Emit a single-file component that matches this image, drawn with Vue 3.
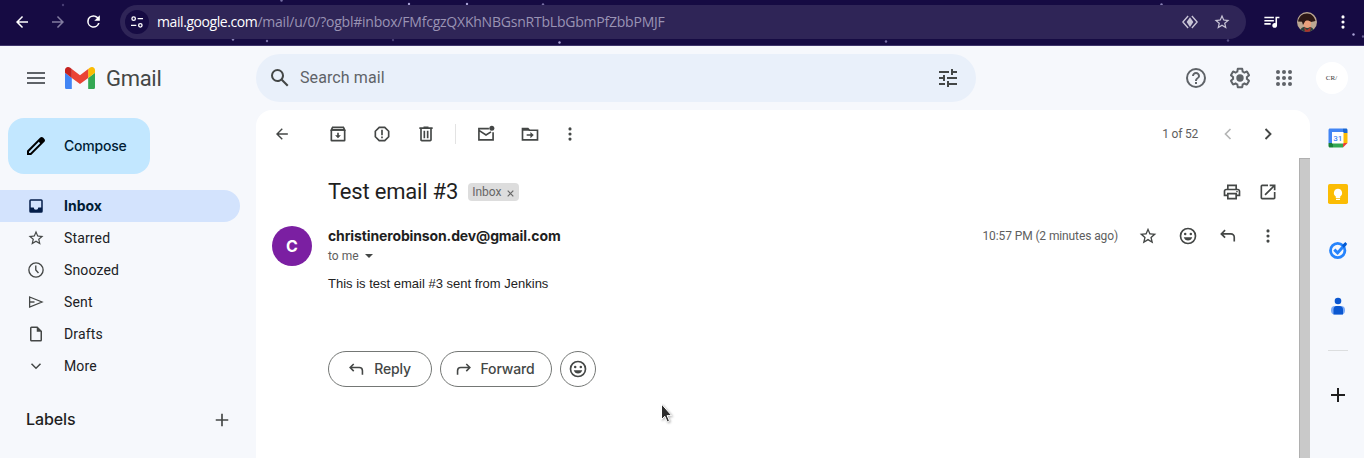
<script setup>
import { h } from 'vue'

const glyphs = {
  menu: '<path d="M3 18h18v-2H3v2zm0-5h18v-2H3v2zm0-7v2h18V6H3z"/>',
  back: '<path d="M20 11H7.83l5.59-5.59L12 4l-8 8 8 8 1.41-1.41L7.83 13H20v-2z"/>',
  forward: '<path d="M12 4l-1.41 1.41L16.17 11H4v2h12.17l-5.58 5.59L12 20l8-8z"/>',
  backThin: '<path d="M19 11.1H8.1l4.8-4.9L11.7 5l-6.9 7 6.9 7 1.2-1.2-4.8-4.9H19z"/>',
  reload: '<path d="M17.65 6.35A7.96 7.96 0 0 0 12 4a8 8 0 1 0 7.73 10h-2.08A6 6 0 1 1 12 6c1.66 0 3.14.69 4.22 1.78L13 11h7V4l-2.35 2.35z"/>',
  site: '<g fill="none" stroke="currentColor" stroke-width="2"><circle cx="7" cy="7" r="2.6"/><path d="M13 7h8M3 17h8"/><circle cx="17" cy="17" r="2.6"/></g>',
  lens: '<path d="M9.500 4 2.500 12l7 8M14.500 4l7 8-7 8" fill="none" stroke="currentColor" stroke-width="1.800" stroke-linejoin="round"/><path d="M12 5.500 16.500 12 12 18.500 7.500 12z"/>',
  star: '<path d="M22 9.24l-7.19-.62L12 2 9.19 8.630 2 9.240l5.460 4.730L5.820 21 12 17.270 18.180 21l-1.630-7.030L22 9.240zM12 15.400l-3.760 2.270 1-4.280-3.320-2.880 4.380-.38L12 6.100l1.710 4.040 4.380.38-3.320 2.880 1 4.280L12 15.400z"/>',
  queue: '<path d="M15 6H3v2h12V6zm0 4H3v2h12v-2zM3 16h8v-2H3v2zM17 6v8.180c-.31-.11-.65-.18-1-.18-1.660 0-3 1.340-3 3s1.340 3 3 3 3-1.340 3-3V8h3V6h-5z"/>',
  dots: '<circle cx="12" cy="5.900" r="1.900"/><circle cx="12" cy="12" r="1.900"/><circle cx="12" cy="18.100" r="1.900"/>',
  search: '<path d="M20.490 19l-5.730-5.730C15.530 12.200 16 10.910 16 9.500A6.500 6.500 0 1 0 9.500 16c1.410 0 2.700-.47 3.770-1.240L19 20.490 20.490 19zM5 9.500C5 7.010 7.010 5 9.500 5S14 7.010 14 9.500 11.990 14 9.500 14 5 11.990 5 9.500z"/>',
  tune: '<path d="M3 17v2h6v-2H3zM3 5v2h10V5H3zm10 16v-2h8v-2h-8v-2h-2v6h2zM7 9v2H3v2h4v2h2V9H7zm14 4v-2H11v2h10zm-6-4h2V7h4V5h-4V3h-2v6z"/>',
  help: '<path d="M11 18h2v-2h-2v2zm1-16a10 10 0 1 0 0 20 10 10 0 0 0 0-20zm0 18a8 8 0 1 1 0-16 8 8 0 0 1 0 16zm0-14c-2.210 0-4 1.790-4 4h2c0-1.100.9-2 2-2s2 .9 2 2c0 2-3 1.750-3 5h2c0-2.250 3-2.500 3-5 0-2.210-1.790-4-4-4z"/>',
  gear: '<path d="M13.850 22.250h-3.700c-.74 0-1.360-.54-1.450-1.270l-.27-1.890a7.500 7.500 0 0 1-.79-.46l-1.800.72c-.7.26-1.470-.03-1.810-.65L2.200 15.530c-.35-.66-.2-1.440.36-1.880l1.530-1.190c-.01-.15-.02-.3-.02-.46s.01-.31.02-.46l-1.520-1.190c-.59-.45-.74-1.260-.37-1.880l1.850-3.190c.34-.62 1.110-.9 1.790-.63l1.810.73c.26-.17.52-.32.78-.46l.27-1.910c.09-.7.71-1.250 1.440-1.250h3.700c.74 0 1.360.54 1.450 1.270l.27 1.890c.27.14.53.29.79.46l1.800-.72c.71-.26 1.480.03 1.820.65l1.840 3.180c.36.66.2 1.440-.36 1.880l-1.520 1.190c.01.15.02.3.02.46s-.01.31-.02.46l1.520 1.190c.56.45.72 1.230.37 1.860l-1.860 3.220c-.34.62-1.110.9-1.800.63l-1.800-.72c-.26.17-.52.32-.78.46l-.27 1.910c-.1.680-.720 1.220-1.460 1.220zm-3.230-2h2.760l.37-2.550.53-.22c.44-.18.88-.44 1.340-.78l.45-.34 2.380.96 1.380-2.400-2.030-1.580.07-.56c.03-.26.06-.51.06-.78s-.03-.53-.06-.78l-.07-.56 2.030-1.580-1.390-2.400-2.390.96-.45-.35c-.42-.32-.87-.58-1.330-.77l-.52-.22-.37-2.550h-2.760l-.37 2.550-.53.21c-.44.19-.88.44-1.340.79l-.45.33-2.380-.95-1.390 2.390 2.030 1.580-.07.56a7 7 0 0 0-.06.79c0 .26.020.53.060.78l.070.560-2.030 1.580 1.380 2.400 2.390-.96.450.350c.430.330.860.580 1.330.770l.530.220.380 2.550z"/><circle cx="12" cy="12" r="3.700"/>',
  apps: '<circle cx="6" cy="6" r="2"/><circle cx="12" cy="6" r="2"/><circle cx="18" cy="6" r="2"/><circle cx="6" cy="12" r="2"/><circle cx="12" cy="12" r="2"/><circle cx="18" cy="12" r="2"/><circle cx="6" cy="18" r="2"/><circle cx="12" cy="18" r="2"/><circle cx="18" cy="18" r="2"/>',
  pencil: '<path d="M20.410 4.940l-1.350-1.350c-.780-.780-2.050-.780-2.830 0L3 16.820V21h4.180L20.410 7.770c.790-.780.790-2.050 0-2.830zM6.350 19H5v-1.350l9.800-9.800 1.350 1.350z"/>',
  inbox: '<path d="M19 3H5a2 2 0 0 0-2 2v14a2 2 0 0 0 2 2h14a2 2 0 0 0 2-2V5a2 2 0 0 0-2-2zm0 11h-4a3 3 0 0 1-6 0H5V5h14v9z"/>',
  clock: '<circle cx="12" cy="12" r="9.500" fill="none" stroke="currentColor" stroke-width="1.800"/><path d="M11.700 6V12l3.600 4" fill="none" stroke="currentColor" stroke-width="1.800"/>',
  send: '<path d="M3.500 5.300 20 12 3.500 18.700z" fill="none" stroke="currentColor" stroke-width="1.700"/><path d="M4 12h6" fill="none" stroke="currentColor" stroke-width="1.900"/>',
  file: '<path d="M14 2H6a2 2 0 0 0-2 2v16c0 1.100.890 2 1.990 2H18a2 2 0 0 0 2-2V8l-6-6zM6 20V4h7v5h5v11H6z"/>',
  down: '<path d="M6 9l6 6 6-6" fill="none" stroke="currentColor" stroke-width="2"/>',
  plus: '<path d="M19.500 13h-6.500v6.500h-2V13H4.500v-2H11V4.500h2V11h6.500z"/>',
  archive: '<path d="M4 7v12.500c0 .3.200.5.500.5h15c.3 0 .5-.2.500-.5V7M4 7l1.500-3h13L20 7z" fill="none" stroke="currentColor" stroke-width="2"/><path d="M4 6h16v2H4zM11 10.500h2v3h2.500L12 17.200 8.500 13.500H11z"/>',
  report: '<path d="M8.700 4h6.600L20 8.700v6.600L15.300 20H8.700L4 15.300V8.700z" fill="none" stroke="currentColor" stroke-width="2"/><path d="M11 7h2v6.500h-2zM11 15h2v2h-2z"/>',
  trash: '<path d="M15 4V3H9v1H4v2h1v13c0 1.100.9 2 2 2h10a2 2 0 0 0 2-2V6h1V4h-5zm2 15H7V6h10v13zM9 8h2v9H9zm4 0h2v9h-2z"/>',
  unread: '<path d="M15.500 5.500H3.500v13.500h17V10M4 8l8 5.200 6-3.800" fill="none" stroke="currentColor" stroke-width="2"/><circle cx="19" cy="5" r="3"/>',
  move: '<path d="M3 6.500v12.500h18V7.500H11.500L9.500 5.500H3z" fill="none" stroke="currentColor" stroke-width="2"/><path d="M3 5h6l2.500 3H3zM8 12.200h4.500V9.500L16.500 13.200 12.500 17v-2.800H8z"/>',
  left: '<path d="M15 6l-6 6 6 6" fill="none" stroke="currentColor" stroke-width="2"/>',
  right: '<path d="M9 6l6 6-6 6" fill="none" stroke="currentColor" stroke-width="2.300"/>',
  print: '<path d="M19 8h-1V3H6v5H5c-1.660 0-3 1.340-3 3v6h4v4h12v-4h4v-6c0-1.660-1.340-3-3-3zM8 5h8v3H8V5zm8 12v2H8v-4h8v2zm2-2v-2H6v2H4v-4c0-.55.450-1 1-1h14c.550 0 1 .450 1 1v4h-2z"/><circle cx="18" cy="11.500" r="1"/>',
  open: '<path d="M19 19H5V5h7V3H5a2 2 0 0 0-2 2v14a2 2 0 0 0 2 2h14c1.100 0 2-.9 2-2v-7h-2v7zM14 3v2h3.590l-9.830 9.830 1.410 1.410L19 6.410V10h2V3h-7z"/>',
  smile: '<circle cx="12" cy="12" r="9" fill="none" stroke="currentColor" stroke-width="2"/><circle cx="8.600" cy="9.500" r="1.500"/><circle cx="15.400" cy="9.500" r="1.500"/><path d="M6.900 13.500h10.200c-.7 2.400-2.700 4-5.100 4s-4.400-1.600-5.100-4z"/>',
  reply: '<path d="M8.500 5 4 9.500 8.500 14M4 9.500h11.500a4 4 0 0 1 4 4V18.500" fill="none" stroke="currentColor" stroke-width="2"/>',
  fwd: '<path d="M15.500 5 20 9.500 15.500 14M20 9.500H8.500a4 4 0 0 0-4 4V18.500" fill="none" stroke="currentColor" stroke-width="2"/>',
}

const Ico = (p) => h('svg', {
  class: 'ico', viewBox: '0 0 24 24', width: p.s || 20, height: p.s || 20, fill: 'currentColor', innerHTML: glyphs[p.n],
})
Ico.props = ['n', 's']

const folders = [
  { name: 'Inbox', icon: 'inbox', active: true },
  { name: 'Starred', icon: 'star' },
  { name: 'Snoozed', icon: 'clock' },
  { name: 'Sent', icon: 'send' },
  { name: 'Drafts', icon: 'file' },
  { name: 'More', icon: 'down' },
]
const sky = [[63, 5, .3], [281.500, .5, .6], [233, 39.500, .7], [267, 41, .6], [409, 4, .9], [467, 4, .9], [543, 4.500, .6], [393, 40, .3], [559.500, 42.500, .9], [886, 41.500, .6], [1161.500, 4.500, .7], [1228, 40.500, .4], [1353.500, 34.500, .9], [1363, 36.500, .5]]
</script>

<template>
  <div class="window">
    <div class="browser">
      <svg class="sky" width="1364" height="45">
        <circle v-for="([x, y, o], i) in sky" :key="i" :cx="x" :cy="y" r="1.2" fill="#b9b3e6" :opacity="o" />
      </svg>
      <Ico n="back" s="18" class="nav-back" />
      <Ico n="forward" s="18" class="nav-fwd" />
      <Ico n="reload" s="19" class="nav-reload" />
      <div class="omnibox">
        <span class="site"><Ico n="site" s="16" /></span>
        <span class="url"><b>mail.google.com</b><i>/mail/u/0/?ogbl#inbox/FMfcgzQXKhNBGsnRTbLbGbmPfZbbPMJF</i></span>
        <Ico n="lens" s="18" />
        <Ico n="star" s="18" />
      </div>
      <Ico n="queue" s="19" class="queue" />
      <svg class="face" width="20" height="20" viewBox="0 0 20 20">
        <clipPath id="face"><circle cx="10" cy="10" r="10" /></clipPath>
        <g clip-path="url(#face)">
          <rect width="20" height="20" fill="#bba792" />
          <path d="M3 20c0-4 3-5.500 7-5.500s7 1.500 7 5.500z" fill="#28433c" />
          <path d="M7 15l3 3 4-3-1 5H8z" fill="#a9342d" />
          <path d="M6.500 7h7.500v5c0 2.500-1.500 4-3.700 4s-3.800-1.500-3.800-4z" fill="#e9a07c" />
          <path d="M1 9.500C2 4 6 1 10.500 1.500c4 .2 7 3 8 7.500l-4.500 1c-2-2-5-2-6-.5L6 13 5 9.800z" fill="#2c1714" />
        </g>
      </svg>
      <Ico n="dots" s="20" class="kebab" />
    </div>

    <header class="top">
      <Ico n="menu" s="24" class="burger" />
      <svg class="logo" width="30" height="22.5" viewBox="52 42 88 66">
        <path fill="#4285f4" d="M58 108h14V74L52 59v43c0 3.320 2.690 6 6 6" />
        <path fill="#34a853" d="M120 108h14c3.320 0 6-2.690 6-6V59l-20 15" />
        <path fill="#fbbc04" d="M120 48v26l20-15v-8c0-7.420-8.470-11.650-14.400-7.200" />
        <path fill="#ea4335" d="M72 74V48l24 18 24-18v26L96 92" />
        <path fill="#c5221f" d="M52 51v8l20 15V48l-5.600-4.200c-5.940-4.450-14.400-.220-14.400 7.200" />
      </svg>
      <span class="brand">Gmail</span>
      <div class="search">
        <Ico n="search" s="24" />
        <span>Search mail</span>
        <Ico n="tune" s="24" />
      </div>
      <Ico n="help" s="24" />
      <Ico n="gear" s="24" />
      <Ico n="apps" s="24" />
      <span class="account">CR/</span>
    </header>

    <div class="body">
      <nav class="side">
        <div class="compose"><Ico n="pencil" s="24" /><span>Compose</span></div>
        <div v-for="f in folders" :key="f.name" class="folder" :class="{ active: f.active }">
          <Ico :n="f.icon" s="18" /><span>{{ f.name }}</span>
        </div>
        <div class="labels"><span>Labels</span><Ico n="plus" s="20" /></div>
      </nav>

      <main class="mail">
        <div class="tools">
          <Ico n="backThin" class="t-back" />
          <Ico n="archive" /><Ico n="report" /><Ico n="trash" />
          <span class="sep"></span>
          <Ico n="unread" /><Ico n="move" /><Ico n="dots" class="more" />
          <span class="count">1 of 52</span>
          <Ico n="left" class="dim" /><Ico n="right" class="next" />
        </div>
        <div class="scroll">
          <article>
            <div class="subject">
              <h1>Test email #3</h1>
              <span class="chip">Inbox<svg width="7" height="7" viewBox="0 0 7 7"><path d="M.7.7l5.600 5.600M6.300.7L.7 6.300" stroke="#666" stroke-width="1.200" /></svg></span>
              <span class="grow"></span>
              <Ico n="print" /><Ico n="open" />
            </div>
            <div class="message">
              <span class="avatar">C</span>
              <div class="content">
                <div class="from">
                  <span class="sender">christinerobinson.dev@gmail.com</span>
                  <span class="time">10:57 PM (2 minutes ago)</span>
                  <Ico n="star" /><Ico n="smile" /><Ico n="reply" /><Ico n="dots" />
                </div>
                <div class="to">to me<svg width="8" height="4" viewBox="0 0 8 4"><path d="M0 0h8L4 4z" fill="#444746" /></svg></div>
                <p>This is test email #3 sent from Jenkins</p>
                <div class="actions">
                  <button class="reply"><Ico n="reply" s="19" /><span>Reply</span></button>
                  <button class="fwd"><Ico n="fwd" s="19" /><span>Forward</span></button>
                  <button class="emoji"><Ico n="smile" /></button>
                </div>
              </div>
            </div>
          </article>
          <div class="bar"></div>
        </div>
      </main>

      <aside class="apps">
        <svg width="20" height="20" viewBox="0 0 20 20">
          <path d="M2 .5h13V5H5v10H.5V2C.5 1.200 1.200.5 2 .5z" fill="#4285f4" />
          <path d="M15 .5h3c.9 0 1.500.6 1.500 1.500v3H15z" fill="#1967d2" /><path d="M15 5h4.500v10H15z" fill="#fbbc04" />
          <path d="M5 15h10v4.500H5z" fill="#34a853" /><path d="M.5 15H5v4.500H2c-.9 0-1.500-.6-1.500-1.500z" fill="#188038" />
          <path d="M15 15h4.500L15 19.500z" fill="#ea4335" /><path d="M4 4h11.500v11.500H4z" fill="#fff" />
          <text x="9.8" y="12.800" text-anchor="middle" class="day">31</text>
        </svg>
        <svg width="20" height="20" viewBox="0 0 20 20">
          <rect width="20" height="20" rx="1.800" fill="#fbbc04" />
          <path d="M10 4.800a4.200 4.200 0 0 0-2.200 7.700V14h4.400v-1.500A4.200 4.200 0 0 0 10 4.800zM8 14.800h4v1.200H8z" fill="#fff" />
        </svg>
        <svg width="20" height="20" viewBox="0 0 20 20">
          <circle cx="9.700" cy="10.500" r="7.200" fill="none" stroke="#2684fc" stroke-width="2.800" />
          <path d="M6.300 9.600l3.300 3.300L17.500 4" fill="none" stroke="#2684fc" stroke-width="3" />
          <path d="M14 5.500 17.300 2l1.900 1.900-3.500 4z" fill="#0059d3" />
        </svg>
        <svg width="20" height="20" viewBox="0 0 20 20">
          <rect x="3" y="10" width="14" height="8.500" rx="4" fill="#7baaf7" />
          <path d="M5.500 18.500v-5c0-2 1.300-3.500 3-3.500h3c2 0 3.500 1.500 3.500 3.500v5z" fill="#0b57d0" />
          <circle cx="10" cy="5" r="3.300" fill="#0b57d0" />
        </svg>
        <hr />
        <svg width="14" height="14" viewBox="0 0 14 14"><path d="M7 0v14M0 7h14" stroke="#1f1f1f" stroke-width="2" /></svg>
      </aside>
    </div>
    <svg class="cursor" width="14" height="21" viewBox="0 0 14 21">
      <path d="M1.500 1v15.500l3.300-3.200 2.400 5.600 2.300-1-2.400-5.300h4.600z" fill="#2b2b2b" stroke="#fff" stroke-width="1" />
    </svg>
  </div>
</template>

<style>
body { margin: 0; overflow: hidden; }
</style>
<style scoped>
.window { position: relative; height: 458px; overflow: hidden; display: flex; flex-direction: column; background: #f6f8fc; font-family: Roboto, "Liberation Sans", sans-serif; font-size: 14px; color: #444746; }
.window :deep(.ico) { display: block; flex: none; }
.browser { position: relative; flex: none; height: 46px; box-sizing: border-box; padding: 0 10px 2px 13px; border-bottom: 1px solid #40366c; background: #160b43; display: flex; align-items: center; color: #fff; }
.sky { position: absolute; left: 0; top: 0; }
.nav-fwd { margin-left: 18px; color: #827ca0; }
.nav-reload { margin-left: 17px; }
.omnibox { position: relative; width: 1126px; height: 34px; margin-left: 17px; box-sizing: border-box; padding: 0 15px 0 5px; border-radius: 17px; background: #2f2557; display: flex; align-items: center; color: #c9c5d6; gap: 14px; }
.site { width: 24px; height: 24px; border-radius: 50%; background: #160b43; color: #fff; display: flex; align-items: center; justify-content: center; }
.url { flex: 1; margin-left: -6px; font: 14px/20px "Open Sans", "Noto Sans", sans-serif; white-space: nowrap; }
.url b { font-weight: 400; color: #fff; letter-spacing: -.42px; }
.url i { font-style: normal; color: #9a93b4; letter-spacing: -.22px; }
.queue { margin-left: 16px; }
.face { margin-left: 16px; }
.kebab { margin-left: 16px; }
.top { flex: none; height: 64px; display: flex; align-items: center; color: #5f6368; gap: 20px; }
.burger { margin-left: 24px; }
.logo { margin-left: -3px; }
.brand { width: 129px; margin-left: -9px; margin-right: .5px; font-size: 22px; letter-spacing: -.3px; color: #444746; }
.search { width: 720px; height: 48px; box-sizing: border-box; padding: 0 16px 0 12px; border-radius: 24px; background: #e9f0fa; display: flex; align-items: center; color: #444746; margin-right: 188px; }
.search span { flex: 1; margin-left: 8.500px; padding-bottom: 2px; font-size: 16px; color: #5f6368; letter-spacing: .1px; }
.account { flex: none; width: 32px; height: 32px; border-radius: 50%; background: #fff; font: 7px/32px "Liberation Serif", serif; text-align: center; color: #333; }
.body { flex: 1; min-height: 0; display: flex; }
.side { width: 256px; flex: none; }
.compose { width: 142px; height: 56px; margin: 8px 0 16px 8px; box-sizing: border-box; padding-left: 16px; border-radius: 16px; background: #c2e7ff; display: flex; align-items: center; gap: 16px; font: 500 14px Inter, sans-serif; letter-spacing: -.2px; color: #001d35; }
.compose .ico { color: #000; }
.compose span, .active span, .labels span, .sender, button span { padding-bottom: 2px; }
.folder { width: 240px; height: 32px; box-sizing: border-box; padding-left: 27px; display: flex; align-items: center; gap: 19px; letter-spacing: .15px; }
.folder span { color: #202124; }
.folder.active { border-radius: 0 16px 16px 0; background: #d3e3fd; font: 700 14px Inter, sans-serif; color: #041e49; letter-spacing: 0; }
.folder.active span { color: #001d35; }
.labels { margin-top: 22px; padding: 0 24px 0 26px; height: 32px; display: flex; align-items: center; justify-content: space-between; }
.labels span { font: 500 16px Inter, sans-serif; letter-spacing: -.1px; color: #1f1f1f; }
.mail { flex: none; width: 1054px; background: #fff; border-radius: 16px 16px 0 0; overflow: hidden; display: flex; flex-direction: column; }
.tools { height: 48px; flex: none; padding: 0 32px 0 16px; display: flex; align-items: center; gap: 24px; }
.t-back { margin-right: 12px; }
.sep { width: 1px; height: 20px; background: #e3e3e3; margin: 0 -4px 0 -5px; }
.more { margin-left: -4px; }
.count { margin-left: auto; margin-right: -4px; font-size: 12px; letter-spacing: -.2px; color: #5e5e5e; }
.dim { color: #b4b5b5; }
.next { margin-left: -4px; }
.scroll { flex: 1; min-height: 0; display: flex; }
article { flex: 1; padding: 20px 21px 0 16px; }
.bar { width: 11px; box-sizing: border-box; background: #c9c9c9; border: solid #b0b0b0; border-width: 1px 0 0 1px; }
.subject { height: 28px; padding-left: 56px; display: flex; align-items: center; gap: 16px; }
h1 { margin: 0; padding-bottom: 2px; font-size: 22px; font-weight: 400; letter-spacing: -.2px; color: #1f1f1f; }
.chip { height: 18px; margin-left: -6px; padding: 0 5px 0 4px; border-radius: 4px; background: #ddd; font-size: 12px; line-height: 18px; color: #666; }
.chip svg { margin: 0 0 -1px 5.500px; }
.grow { flex: 1; }
.message { display: flex; margin-top: 20px; }
.avatar { width: 40px; height: 40px; flex: none; margin-right: 16px; border-radius: 50%; background: #7b1fa2; color: #fff; font: 700 16px/40px Inter, sans-serif; text-align: center; }
.content { flex: 1; }
.from { height: 20px; display: flex; align-items: center; gap: 20px; }
.sender { flex: 1; font: 700 14px Inter, sans-serif; letter-spacing: -.13px; color: #1f1f1f; }
.time { font-size: 12px; letter-spacing: -.11px; color: #5e5e5e; }
.to { height: 20px; font-size: 12px; line-height: 20px; color: #5e5e5e; }
.to svg { margin: 0 0 2px 6px; }
p { margin: 8px 0 0; font: 13px/20px "Liberation Sans", Arial, sans-serif; color: #222; }
.actions { display: flex; gap: 8px; margin-top: 57px; }
button { height: 36px; box-sizing: border-box; padding: 0 2px 0 0; border: 1px solid #747775; border-radius: 18px; background: #fff; display: flex; align-items: center; justify-content: center; gap: 8px; font: 500 14px Inter, sans-serif; letter-spacing: -.16px; color: #444746; }
.reply { width: 104px; }
.fwd { width: 112px; padding-right: 4px; }
.emoji { width: 36px; padding: 0; }
.apps { width: 54px; box-sizing: border-box; padding: 18px 0 0 2px; display: flex; flex-direction: column; align-items: center; gap: 36px; }
.apps { width: 54px; }
.apps hr { width: 20px; height: 1px; margin: -2px 0 0; border: 0; background: #dcdedf; flex: none; }
.apps > svg { flex: none; }
.apps hr + svg { margin-top: 1px; }
.day { font: 500 8px Roboto, sans-serif; fill: #4285f4; }
.cursor { position: absolute; left: 660px; top: 403px; filter: drop-shadow(1px 1px 1px rgba(0, 0, 0, .3)); }
</style>
